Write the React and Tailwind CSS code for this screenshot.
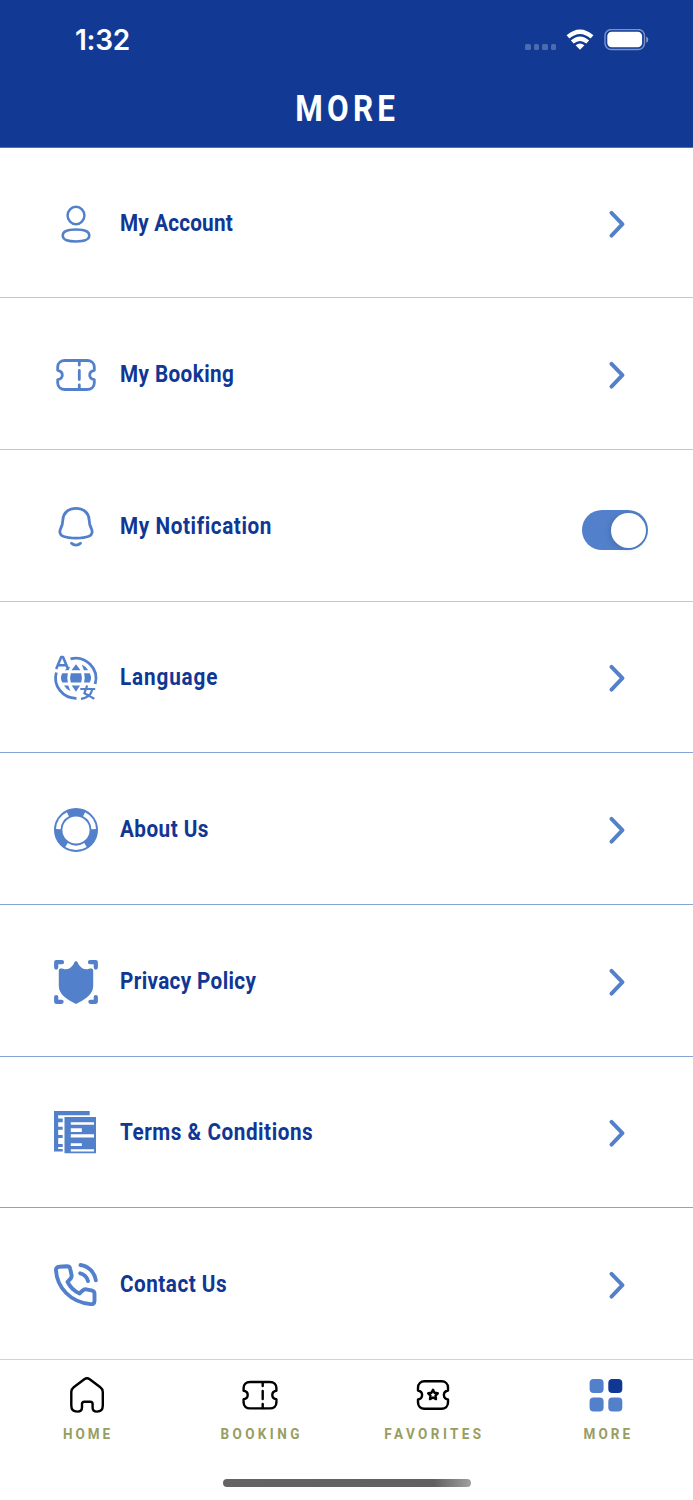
import clsx from "clsx";

/** ==== Icons ==== */
function Icon({ children }) {
  return (
    <svg viewBox="0 0 44 44" className="size-11 shrink-0 overflow-visible" fill="none" stroke="currentColor" strokeWidth="2.8" strokeLinecap="round" strokeLinejoin="round">
      {children}
    </svg>
  );
}

function AccountIcon() {
  return (
    <Icon>
      <g strokeWidth="2.5">
        <ellipse cx="22" cy="13.5" rx="8.4" ry="8.8" />
        <path d="M22 27.6C29.5 27.6 35.3 29 35.3 33.6S29.5 39.5 22 39.5S8.7 38.2 8.7 33.6S14.5 27.6 22 27.6Z" />
      </g>
    </Icon>
  );
}

const TICKET =
  "M11 7.5H33C37.2 7.5 40.3 10.2 40.3 14V17.3C37.5 17.8 35.7 19.7 35.7 22S37.5 26.2 40.3 26.7V30C40.3 33.8 37.2 36.5 33 36.5H11C6.8 36.5 3.7 33.8 3.7 30V26.7C6.5 26.2 8.3 24.3 8.3 22S6.5 17.8 3.7 17.3V14C3.7 10.2 6.8 7.5 11 7.5Z";

function TicketIcon() {
  return (
    <Icon>
      <path d={TICKET} />
      <path d="M25.3 8V12M25.3 17.5V26.5M25.3 32V36" />
    </Icon>
  );
}

function BellIcon() {
  return (
    <Icon>
      <path d="M22 3.4C14.2 3.4 9.2 8.3 8.9 14.5C8.7 19 8.4 20.2 6.9 23C5.2 26.2 5.4 30 9 31.3C15.5 33.8 28.5 33.8 35 31.3C38.6 30 38.8 26.2 37.1 23C35.6 20.2 35.3 19 35.1 14.5C34.8 8.3 29.8 3.4 22 3.4Z" />
      <path d="M17.5 38.3C20 40.8 24 40.8 26.5 38.3" />
    </Icon>
  );
}

function LanguageIcon() {
  return (
    <Icon>
      <path d="M16.5 2.8A20.4 20.4 0 0 1 41.2 28M22.5 42.3A20.4 20.4 0 0 1 2.3 16.5" strokeLinecap="butt" />
      <path d="M2.2 13L7.2 1H9L14 13M4 9.3H12.2" strokeWidth="2.6" strokeLinecap="butt" />
      <g fill="currentColor" stroke="none">
        <path d="M16.8 17.2H27.2Q28.7 22 27.2 26.6H16.8Q15.3 22 16.8 17.2Z" />
        <path d="M8.3 17.2H13.9Q12.7 22 13.9 26.6H8.3Q5.6 22 8.3 17.2Z" />
        <path d="M30.1 17.2H35.7Q38.4 22 35.7 26.6H30.1Q31.3 22 30.1 17.2Z" />
        <path d="M22 8.3L26.5 14.3H17.5Z" />
        <path d="M27.8 8.6Q31.8 10.5 34.3 14.3H29.9Z" />
        <path d="M16.2 10.5L14.6 14.3H10.6Q13 12.3 16.2 10.5Z" />
        <path d="M17.7 29.4H26L22 35.8Z" />
        <path d="M10 29.4H14.3L16.3 35Q12 33 10 29.4Z" />
      </g>
      <path d="M26.3 33H41.2M33.2 29.5L30.3 37.3C34 39 37 41 40.3 42.8M38.3 33.5C37 39 33 42 27 42.8" strokeWidth="2.2" strokeLinecap="butt" />
    </Icon>
  );
}

function AboutIcon() {
  return (
    <Icon>
      <circle cx="22" cy="22" r="17.8" strokeWidth="8.4" />
      <g stroke="white" strokeWidth="4.6" strokeLinecap="butt">
        <path d="M4.3 21.1A17.7 17.7 0 0 1 13.9 6.3" />
        <path d="M30.1 6.3A17.7 17.7 0 0 1 39.7 21.1" />
        <path d="M12.5 37A17.7 17.7 0 0 0 31.5 37" />
      </g>
    </Icon>
  );
}

function PrivacyIcon() {
  return (
    <Icon>
      <path d="M2.2 7.6V2.2H8M36 2.2H41.8V7.6M2.2 37V41.8H7.6M36.4 41.8H41.8V37" strokeWidth="4.2" />
      <path d="M22 1C23.5 1 23.8 3.3 25 5C27.5 8.8 31.5 10.3 35 8.8C36.5 8.2 39.2 8 39.2 10.5V26C39.2 34.5 31 39.5 22 44C13 39.5 4.8 34.5 4.8 26V10.5C4.8 8 7.5 8.2 9 8.8C12.5 10.3 16.5 8.8 19 5C20.2 3.3 20.5 1 22 1Z" fill="currentColor" stroke="none" />
    </Icon>
  );
}

function TermsIcon() {
  return (
    <Icon>
      <g fill="currentColor" stroke="none">
        <path d="M0 0H35.7V4.2H4.2V7.6H8.7V11.3H4.2V15.7H8.7V18.7H4.2V24H8.7V27H4.2V33H8.7V36H4.2V38H8.7V40.5H0Z" />
        <path d="M10.5 6H42V42.2H10.5Z" />
      </g>
      <g fill="white" stroke="none">
        <path d="M16.8 11.2H40V13.8H16.8ZM16.8 17.2H27.8V21H16.8ZM16.8 23.2H40V26.5H16.8ZM16.8 32.3H27.8V35H16.8ZM16.8 38.3H40V40.6H16.8Z" />
      </g>
    </Icon>
  );
}

function PhoneIcon() {
  return (
    <Icon>
      <g strokeWidth="3.9">
        <path d="M5.3 3.7L12.8 3.2C15 3.2 16 4.2 16.2 5.8L17.6 12.2C18 14.3 17.2 15.3 13.5 18.8C16 23.8 20 28 25.6 30.5C29 26.5 30 26 32 26.3L37.5 27.3C39.5 27.7 40.5 28.7 40.5 30.4V38C40.3 40.6 39 41.4 36.5 41.1C16.5 39.3 3 24.5 2 7.5C1.8 5.3 3 3.9 5.3 3.7Z" />
        <path d="M26.2 10.3C30 11.2 33 14 34 18M26.5 2C34.3 3 40.5 9 41.8 17.3" />
      </g>
    </Icon>
  );
}

/** ==== Data ==== */
const ITEMS = [
  { label: "My Account", icon: AccountIcon, height: "h-[150px] pt-[2px]", border: "border-[#b8c8df]", tracking: "tracking-[0.2px]" },
  { label: "My Booking", icon: TicketIcon, height: "h-[152px] pt-[3px]", border: "border-[#b8c8df]", tracking: "tracking-[0.45px]" },
  { label: "My Notification", icon: BellIcon, height: "h-[152px] pt-[2px]", border: "border-[#b8c8df]", tracking: "tracking-[0.67px]", toggle: true },
  { label: "Language", icon: LanguageIcon, height: "h-[151px] pt-[2px]", border: "border-[#84a4d4]", tracking: "tracking-[0.95px]" },
  { label: "About Us", icon: AboutIcon, height: "h-[152px] pt-[3px]", border: "border-[#84a4d4]", tracking: "tracking-[0.5px]" },
  { label: "Privacy Policy", icon: PrivacyIcon, height: "h-[152px] pt-[2px]", border: "border-[#84a4d4]", tracking: "tracking-[0.4px]" },
  { label: "Terms & Conditions", icon: TermsIcon, height: "h-[151px] pt-[2px]", border: "border-[#84a4d4]", tracking: "tracking-[0.6px]" },
  { label: "Contact Us", icon: PhoneIcon, height: "h-[152px] pt-[3px]", border: "border-[#c5d4e8]", tracking: "tracking-[0.55px]" },
];

function StatusBar() {
  return (
    <div className="flex h-20 items-center justify-between pr-11 pl-[75px]">
      <span className="font-['Inter',sans-serif] text-[28px] font-semibold tracking-[-0.3px]">1:32</span>
      <div className="flex items-center gap-2.5">
        <div className="flex gap-[3px] pt-3.5">
          {[0, 1, 2, 3].map((i) => (
            <span key={i} className="h-[5.5px] w-[5.5px] rounded-[1.5px] bg-white/25" />
          ))}
        </div>
        <svg viewBox="0 0 28 22" className="h-[22px] w-7" fill="none" stroke="white" strokeWidth="4.3">
          <path d="M2 7.8Q14 -2.4 26 7.8" />
          <path d="M6.3 13Q14 6.3 21.7 13" />
          <path d="M14 20.7L9.6 16.2Q14 12.6 18.4 16.2Z" fill="white" stroke="none" />
        </svg>
        <svg viewBox="0 0 45 22" className="h-[22px] w-[45px]" fill="none">
          <rect x="1" y="0.5" width="39.5" height="20" rx="6.3" stroke="white" strokeOpacity=".45" strokeWidth="1.4" />
          <rect x="3.3" y="2.8" width="34.8" height="15.4" rx="4.3" fill="white" />
          <path d="M42.3 7.5Q44.3 8.6 44.3 10.7T42.3 14Z" fill="white" fillOpacity=".5" />
        </svg>
      </div>
    </div>
  );
}

function Row({ item }) {
  const ItemIcon = item.icon;
  return (
    <li className={clsx("flex items-center border-b pl-[54px]", item.height, item.border)}>
      <span className="text-[#5280ca]">
        <ItemIcon />
      </span>
      <span className={clsx("mt-px ml-[22px] origin-left scale-x-90 text-[23px] font-bold whitespace-nowrap text-[#103794]", item.tracking)}>{item.label}</span>
      {item.toggle ? (
        <span className="mt-[7px] mr-[45px] ml-auto flex h-10 w-[66px] items-center justify-end rounded-full bg-[#5280ca] pr-[2.5px]">
          <span className="size-[35px] rounded-full bg-white shadow-[-1px_1px_6px_rgba(0,0,0,0.15)]" />
        </span>
      ) : (
        <svg viewBox="0 0 16 28" className="mr-[68px] ml-auto h-7 w-4" fill="none" stroke="#5280ca" strokeWidth="3.9" strokeLinecap="round" strokeLinejoin="round">
          <path d="M2.5 2.8L13.4 14.2L2.5 25.6" />
        </svg>
      )}
    </li>
  );
}

function Tab({ label, tracking, children }) {
  return (
    <div className="flex flex-1 flex-col items-center pt-[15px]">
      <svg viewBox="0 0 40 40" className="size-10" fill="none" stroke="black" strokeWidth="2.4" strokeLinecap="round" strokeLinejoin="round">
        {children}
      </svg>
      <span className={clsx("mt-2 scale-x-90 text-[15px] leading-[22px] font-bold text-[#989d61]", tracking)}>{label}</span>
    </div>
  );
}

export default function App() {
  return (
    <div className="flex h-[1500px] w-[693px] flex-col overflow-hidden bg-white font-['Roboto',sans-serif]">
      <header className="h-[148px] border-b border-[#4c70b5] bg-[#123a94] text-white">
        <StatusBar />
        <h1 className="pl-0.5 text-center text-[37px] leading-[58px] font-bold tracking-[5px]">
          <span className="inline-block scale-x-85">MORE</span>
        </h1>
      </header>

      <ul>
        {ITEMS.map((item) => (
          <Row key={item.label} item={item} />
        ))}
      </ul>

      <nav className="flex h-[119px]">
        <Tab label="HOME" tracking="tracking-[3.2px] pl-[3.5px]">
          <path d="M17.3 4.2Q20 2.3 22.7 4.2L33.3 12.2Q35.8 14 35.8 17V30.5C35.8 34.5 33.7 36.6 30 36.6C26.8 36.6 25.6 35.3 25.6 32.5V29Q25.6 26.7 23.3 26.7H17.4Q15 26.7 15 29V32.5C15 35.3 13.6 36.6 10.2 36.6C6.2 36.6 4.3 34.5 4.3 30.5V17Q4.3 14 6.7 12.2Z" />
        </Tab>
        <Tab label="BOOKING" tracking="tracking-[3.8px] pl-[4px]">
          <path d="M10 7H30C33.8 7 36.4 9.3 36.4 13V15.8C33.8 16.2 32.3 17.9 32.3 20S33.8 23.8 36.4 24.2V27.5C36.4 31 33.8 33.4 30 33.4H10C6.2 33.4 3.6 31 3.6 27.5V24.2C6.2 23.8 7.7 22.1 7.7 20S6.2 16.2 3.6 15.8V13C3.6 9.3 6.2 7 10 7Z" />
          <path d="M22.7 7.5V11M22.7 16V24M22.7 29V33" />
        </Tab>
        <Tab label="FAVORITES" tracking="tracking-[3.8px] pl-[4px]">
          <path d="M11.5 6.2H28.5C32.3 6.2 35 8.9 35 12.5V15.5C32.4 16 30.9 17.7 30.9 20S32.4 24 35 24.5V27.5C35 31.2 32.3 33.8 28.5 33.8H11.5C7.7 33.8 5 31.2 5 27.5V24.5C7.6 24 9.1 22.3 9.1 20S7.6 16 5 15.5V12.5C5 8.9 7.7 6.2 11.5 6.2Z" />
          <path d="M20 14.8L21.5 17.8L24.8 18.3L22.5 20.7L23 24.1L20 22.5L17 24.1L17.5 20.7L15.2 18.3L18.5 17.8Z" />
        </Tab>
        <Tab label="MORE" tracking="tracking-[3.4px] pl-[4px]">
          <g stroke="none" fill="#5280ca">
            <rect x="3.6" y="4" width="14" height="14" rx="4" />
            <rect x="22.3" y="4" width="14" height="14" rx="4" fill="#103794" />
            <rect x="3.6" y="22.5" width="14" height="14" rx="4" />
            <rect x="22.3" y="22.5" width="14" height="14" rx="4" />
          </g>
        </Tab>
      </nav>
      <div className="mx-auto h-2 w-[248px] rounded-full bg-linear-to-r from-[#646464] via-[#606060] via-85% to-[#a0a0a0]" />
    </div>
  );
}
